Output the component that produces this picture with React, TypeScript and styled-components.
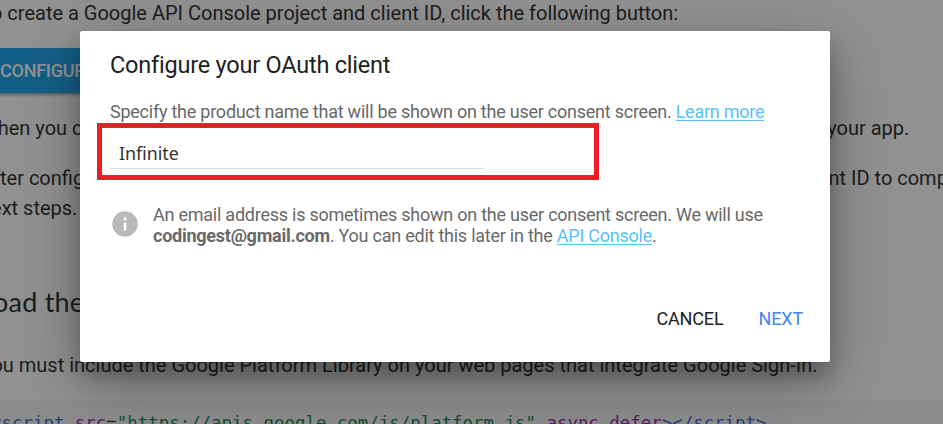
import React from "react";
import styled, { createGlobalStyle } from "styled-components";

const Global = createGlobalStyle`
  * { box-sizing: border-box; }
  body { margin: 0; background: #fff; font-family: Roboto, "Liberation Sans", sans-serif; }
  p, h2, pre { margin: 0; font-weight: 400; }
`;

const Screen = styled.div`
  position: relative;
  width: 943px;
  height: 424px;
  overflow: hidden;
  background: #fff;
`;

const Article = styled.main`
  display: flex;
  flex-direction: column;
  align-items: flex-start;
  margin-left: -20px;
  color: #363636;
`;

const Paragraph = styled.p<{ $gap?: number }>`
  margin-top: ${(p) => p.$gap ?? 0}px;
  font-size: 20px;
  line-height: 30px;
  white-space: nowrap;
`;

const ConfigureButton = styled.button`
  height: 45px;
  margin-top: 20px;
  padding: 0 20px;
  border: 0;
  background: #24a8ee;
  box-shadow: 0 2px 3px rgba(0, 0, 0, 0.35);
  color: #fff;
  font: 500 18px/45px Roboto, sans-serif;
  letter-spacing: -0.25px;
  white-space: nowrap;
`;

const SectionTitle = styled.h2`
  margin-top: 61px;
  font: 400 27px/36px Lato, "Open Sans", sans-serif;
  letter-spacing: 0.2px;
  white-space: nowrap;
`;

const Code = styled.pre`
  width: 980px;
  height: 60px;
  margin-top: 20px;
  padding: 9px 0 0 11px;
  background: #f7f7f7;
  color: #37474f;
  font: 17.42px/28px "DejaVu Sans Mono", monospace;
`;

const Token = styled.span<{ $color: string }>`
  color: ${(p) => p.$color};
`;

const Scrim = styled.div`
  position: absolute;
  inset: 0;
  background: rgba(0, 0, 0, 0.43);
`;

const Dialog = styled.section`
  position: absolute;
  left: 80px;
  top: 31px;
  width: 750px;
  height: 331px;
  padding: 19px 27px 0 30px;
  display: flex;
  flex-direction: column;
  align-items: flex-start;
  border-radius: 2px;
  background: #fff;
  box-shadow: 0 19px 60px rgba(0, 0, 0, 0.3), 0 15px 20px rgba(0, 0, 0, 0.22);
`;

const DialogTitle = styled.h2`
  color: #212121;
  font-size: 23.5px;
  line-height: 30px;
  letter-spacing: -0.22px;
  white-space: nowrap;
`;

const DialogText = styled.p`
  color: #686868;
  font-size: 18px;
  line-height: 21px;
  letter-spacing: -0.24px;
  white-space: nowrap;
`;

const Prompt = styled(DialogText)`
  margin-top: 21px;
`;

const Link = styled.a`
  color: #58c1f8;
  text-decoration: underline;
  text-decoration-thickness: 1px;
  text-underline-offset: 2px;
`;

const Highlight = styled.div`
  width: 502px;
  height: 57px;
  margin: 1px 0 0 -13px;
  padding: 10px 8px 0;
  border: 5px solid #ee1c25;
`;

const NameInput = styled.input`
  display: block;
  width: 375px;
  height: 31px;
  padding: 0 0 1px 9px;
  border: 0;
  border-bottom: 1px solid #dcdcdc;
  outline: 0;
  background: transparent;
  color: #333;
  font: 17.8px/28px "Noto Sans", sans-serif;
`;

const Notice = styled.div`
  display: flex;
  align-items: center;
  gap: 15px;
  margin: 24px 0 0 2px;
`;

const InfoIcon = styled.svg`
  width: 26px;
  height: 26px;
  margin-top: -3px;
`;

const Actions = styled.footer`
  display: flex;
  gap: 35px;
  align-self: flex-end;
  margin-top: 62px;
`;

const Action = styled.button<{ $primary?: boolean }>`
  padding: 0;
  border: 0;
  background: none;
  color: ${(p) => (p.$primary ? "#4285f4" : "#212121")};
  font: 400 18px/21px Roboto, sans-serif;
  letter-spacing: -0.15px;
`;

export default function App() {
  return (
    <Screen>
      <Global />
      <Article>
        <Paragraph $gap={-2}>
          To create a Google API Console project and client ID, click the following button:
        </Paragraph>
        <ConfigureButton>CONFIGURE A PROJECT</ConfigureButton>
        <Paragraph $gap={20}>
          When you configure the project, select the Web browser client type and specify the origin URI of your app.
        </Paragraph>
        <Paragraph $gap={20}>
          After configuration is complete, take note of the client ID that was created. You will need the client ID to complete the
          <br />
          next steps.
        </Paragraph>
        <SectionTitle>Load the Google Platform Library</SectionTitle>
        <Paragraph $gap={30}>
          You must include the Google Platform Library on your web pages that integrate Google Sign-In.
        </Paragraph>
        <Code>
          <Token $color="#4a72cc">&lt;script</Token> <Token $color="#9c34ab">src</Token>=
          <Token $color="#2a8a5a">"https://apis.google.com/js/platform.js"</Token>{" "}
          <Token $color="#9c34ab">async defer</Token>
          <Token $color="#4a72cc">&gt;&lt;/script&gt;</Token>
        </Code>
      </Article>
      <Scrim />
      <Dialog role="dialog" aria-label="Configure your OAuth client">
        <DialogTitle>Configure your OAuth client</DialogTitle>
        <Prompt>
          Specify the product name that will be shown on the user consent screen. <Link>Learn more</Link>
        </Prompt>
        <Highlight>
          <NameInput defaultValue="Infinite" aria-label="Product name" />
        </Highlight>
        <Notice>
          <InfoIcon viewBox="0 0 26 26">
            <circle cx="13" cy="13" r="12.7" fill="#b9b9b9" />
            <path d="M11.7 6.5h2.7v2.7h-2.7zM11.7 11.7h2.7v7.8h-2.7z" fill="#fff" />
          </InfoIcon>
          <DialogText>
            An email address is sometimes shown on the user consent screen. We will use
            <br />
            <b>codingest@gmail.com</b>. You can edit this later in the <Link>API Console</Link>.
          </DialogText>
        </Notice>
        <Actions>
          <Action>CANCEL</Action>
          <Action $primary>NEXT</Action>
        </Actions>
      </Dialog>
    </Screen>
  );
}
